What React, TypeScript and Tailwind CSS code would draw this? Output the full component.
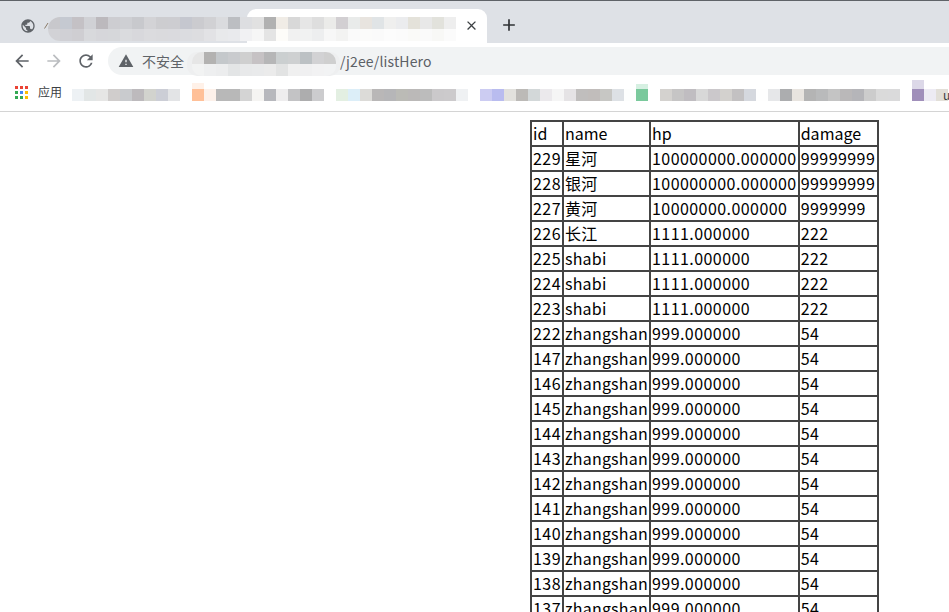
import { MdAdd, MdArrowBack, MdArrowForward, MdClose, MdPublic, MdRefresh, MdWarning } from "react-icons/md";

const heroes: [string, string, string, string][] = [
  ["229", "星河", "100000000.000000", "99999999"],
  ["228", "银河", "100000000.000000", "99999999"],
  ["227", "黄河", "10000000.000000", "9999999"],
  ["226", "长江", "1111.000000", "222"],
  ["225", "shabi", "1111.000000", "222"],
  ["224", "shabi", "1111.000000", "222"],
  ["223", "shabi", "1111.000000", "222"],
  ...["222", "147", "146", "145", "144", "143", "142", "141", "140", "139", "138", "137"].map(
    (id): [string, string, string, string] => [id, "zhangshan", "999.000000", "54"],
  ),
];

// pixelated smudges over the private parts of the browser bar
const Mosaic = ({ rows, cell = 12, className }: { rows: string[][]; cell?: number; className: string }) => (
  <svg
    className={className}
    width={Math.max(...rows.map((r) => r.length)) * cell}
    height={rows.length * cell}
    shapeRendering="crispEdges"
  >
    {rows.map((row, y) =>
      row.map((c, x) => <rect key={`${x}-${y}`} x={x * cell} y={y * cell} width={cell} height={cell} fill={c} />),
    )}
  </svg>
);

const tabRows = [
  ["#c8c8cc", "#c5c9d1", "#c4c1c5", "#d0d1d5", "#bcb9bd", "#cdcdd1", "#cecfd3", "#c8c9cd", "#d3d3d6", "#cdcdd0", "#cdcdd1", "#c5c7cf", "#cbcbcf", "#d1d1d4", "#dadbde", "#bcbec2", "#dddee1", "#e1e1e1", "#b1b1b1", "#f0ece6", "#d8d8d8", "#e6e6e6", "#dedede", "#ebebe9", "#d2cfd2", "#e9ebea", "#e8e4df", "#e0e4e6", "#efefee", "#ebecee", "#e4e2da", "#e8e8e8", "#e2e2dc", "#eeeeee"],
  ["#d2d2d6", "#d0d0d5", "#cfced2", "#d8d9dc", "#d6d6da", "#d6d7da", "#dadbde", "#d8d8dc", "#dbdbde", "#dadadd", "#dadade", "#dbdce0", "#dddde0", "#e2e2e5", "#e8e9eb", "#e9eaed", "#f1f1f3", "#f6f6f6", "#e4e4e4", "#fdfcf9", "#f1f1f1", "#f1f2f2", "#edeeef", "#f7f7f7", "#f3f3f2", "#fafafa", "#fbfbfa", "#fafafa", "#fcfcfc", "#fbfbfb", "#fafaf8", "#fafafa", "#f8f8f6", "#fbfbfb"],
];

const urlRows = [
  ["#e6e6e6", "#b3b2b1", "#c4c8cb", "#c9cbce", "#cfcfcf", "#c6c2c4", "#b6b6b7", "#cbcfd0", "#ced0d1", "#bcc1c4", "#d2d2d4", "#cfcfcf"],
  ["#f2f3f3", "#eeeff0", "#ecedee", "#e3e5e6", "#e8e9ea", "#e9eaeb", "#ebebeb", "#e2e3e3", "#f0f0f0", "#f0f0f1", "#f2f2f3", "#f2f3f4"],
];

const bookmarkRow = [
  ["#edf1f4", "#e2e6e6", "#e6e6e5", "#d0cdcc", "#c9cbce", "#bdbabd", "#d2d3ce", "#ccced6", "#e3e4e6", "#ffffff"],
  ["#ffc098", "#fdf1ea", "#b8b8b8", "#b8b8b8", "#d4d4d4", "#f5f4f2", "#b7b8bd", "#eeedee", "#c3c3c5", "#adadae", "#ccccce", "#ffffff", "#e3efe2", "#dceef8", "#dcdbd8", "#b9b7b7", "#b6b6b8", "#bbbbb6", "#bbb9b8", "#bcbcbc", "#cbc9cb", "#cccacc", "#eff1f3", "#ffffff"],
  ["#ccccf2", "#b9bcef", "#e2e1dd", "#bcbab7", "#d3d8d9", "#ebe9ec", "#f5f5f5", "#e5e3e5", "#c0bebd", "#c1bdbb", "#c7c7c4", "#dde1e5", "#fdfefd"],
  ["#7ac99c", "#ffffff", "#d4d2cf", "#c6c5c5", "#c0bdc1", "#d8d8d8", "#cbc8cb", "#d3d1ce", "#c3c1c2", "#d5d8de", "#fefefe", "#e6e7e9", "#acadaf", "#e8e4df", "#b4b4b4", "#b9babb", "#c4c4c4", "#bab8b9", "#b5b5b9", "#cccccc", "#dadada", "#dadadb", "#ffffff", "#a08fba", "#edebf3", "#e2dfd8"],
];

const AppsIcon = () => {
  const colors = ["#ea4335", "#ea4335", "#ea4335", "#34a853", "#4285f4", "#fbbc04", "#34a853", "#34a853", "#fbbc04"];
  return (
    <svg width="13" height="13" viewBox="0 0 13 13" className="shrink-0">
      {colors.map((c, i) => (
        <rect key={i} x={(i % 3) * 5} y={Math.floor(i / 3) * 5} width="3" height="3" fill={c} />
      ))}
    </svg>
  );
};

const cellClass = "overflow-hidden whitespace-nowrap border-2 border-[#444] px-[1px] py-0";
// digits run wider in the reference's font than in the stand-in
const numClass = "tracking-[0.44px]";

const App = () => {
  return (
    <div className="relative h-screen overflow-hidden bg-white font-['Noto_Sans_CJK_SC','Noto_Sans',sans-serif]">
      {/* tab strip */}
      <div className="flex h-[43px] items-end border-t border-[#5f6368] bg-[#dee1e6]">
        <div className="flex h-[33px] w-[247px] items-center pb-[1px] pl-[20px]">
          <MdPublic size={16} className="text-[#5f6368]" />
          <svg width="5" height="7" className="ml-[8px] mt-[-1px]">
            <path d="M0.5 6.5 L4 1" stroke="#8a7a68" strokeWidth="1" fill="none" />
          </svg>
        </div>
        <div className="flex h-[34px] w-[240px] items-center justify-end rounded-t-[9px] bg-white pb-[2px] pr-[8px]">
          <MdClose size={15} className="text-[#3c4043]" />
        </div>
        <div className="flex h-[34px] items-center pb-[2px] pl-[12px]">
          <MdAdd size={20} className="text-[#2f3235]" />
        </div>
      </div>

      {/* toolbar */}
      <div className="flex h-[32px] items-center bg-white pt-[4px]">
        <div className="flex w-[108px] items-center gap-[12px] pl-[12px]">
          <MdArrowBack size={20} className="text-[#5f6368]" />
          <MdArrowForward size={20} className="text-[#bbbdc0]" />
          <MdRefresh size={20} className="text-[#5f6368]" />
        </div>
        <div className="flex h-[28px] flex-1 items-center rounded-l-full bg-[#f1f3f4] pl-[10px] text-[14px] text-[#5f6368]">
          <MdWarning size={16} className="text-[#5f6368]" />
          <span className="ml-[8px] w-[198px]">不安全</span>
          <span className="tracking-[0.15px] text-[#5b6066]">/j2ee/listHero</span>
        </div>
      </div>

      {/* bookmarks bar */}
      <div className="flex h-[37px] items-center border-b border-[#d4d4d4] bg-white pb-[2px] pl-[15px]">
        <AppsIcon />
        <span className="ml-[10px] text-[12px] text-[#3c4043]">应用</span>
      </div>

      <Mosaic rows={tabRows} className="absolute left-[48px] top-[17px] rounded-l-[12px]" />
      <div className="absolute left-[187px] top-[52px] h-[24px] w-[153px] rounded-[10px] bg-[#eeeff0]" />
      <Mosaic rows={urlRows} className="absolute left-[192px] top-[52px] rounded-[10px]" />
      <Mosaic rows={[bookmarkRow[0]]} className="absolute left-[72px] top-[89px]" />
      <Mosaic rows={[bookmarkRow[1]]} className="absolute left-[192px] top-[89px]" />
      <Mosaic rows={[bookmarkRow[2]]} className="absolute left-[480px] top-[89px]" />
      <Mosaic rows={[bookmarkRow[3]]} className="absolute left-[636px] top-[89px]" />
      <div className="absolute left-[192px] top-[83px] h-[6px] w-[12px] bg-[#fff1e8]" />
      <div className="absolute left-[636px] top-[84px] h-[5px] w-[12px] bg-[#d6f0e2]" />
      <div className="absolute left-[912px] top-[80px] h-[9px] w-[12px] bg-[#dcd8e8]" />
      <span className="absolute left-[943px] top-[86px] text-[12px] text-[#3c4043]">u</span>

      {/* hero list */}
      <table className="ml-[530px] mt-[8px] table-fixed border-collapse text-[16px] leading-[23px] text-black">
        <colgroup>
          <col className="w-[32px]" />
          <col className="w-[87px]" />
          <col className="w-[148px]" />
          <col className="w-[79px]" />
        </colgroup>
        <tbody>
          <tr className="h-[25px]">
            {["id", "name", "hp", "damage"].map((h) => (
              <td key={h} className={cellClass}>
                {h}
              </td>
            ))}
          </tr>
          {heroes.map((row) => (
            <tr key={row[0]} className="h-[25px]">
              <td className={`${cellClass} ${numClass}`}>{row[0]}</td>
              <td className={`${cellClass} tracking-[0.2px]`}>{row[1]}</td>
              <td className={`${cellClass} ${numClass}`}>{row[2]}</td>
              <td className={`${cellClass} ${numClass}`}>{row[3]}</td>
            </tr>
          ))}
        </tbody>
      </table>
    </div>
  );
};

export default App;
